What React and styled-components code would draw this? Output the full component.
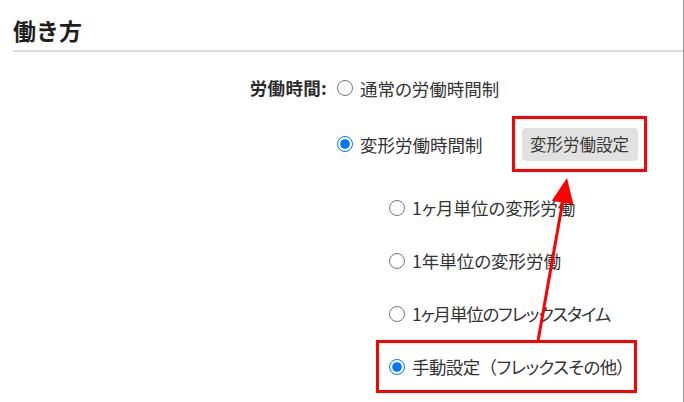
import React from "react";
import styled, { createGlobalStyle } from "styled-components";

const GlobalStyle = createGlobalStyle`
  html, body {
    margin: 0;
    padding: 0;
    background: #fff;
  }
  body {
    font-family: "Noto Sans CJK JP", "Noto Sans", sans-serif;
    color: #333;
  }
`;

const Page = styled.div`
  position: relative;
  box-sizing: border-box;
  height: 100vh;
  min-height: 402px;
  padding-left: 13px;
  border-right: 1px solid #9c9c9c;
  overflow: hidden;
`;

const Title = styled.h2`
  margin: 0;
  padding: 15px 0 5px;
  font-size: 23px;
  line-height: 30px;
  font-weight: 700;
  color: #1e1e1e;
  border-bottom: 2px solid #d9d9d9;
`;

const Form = styled.div`
  display: grid;
  grid-template-columns: 314px 1fr;
  column-gap: 10px;
  padding-top: 21px;
  font-size: 17.5px;
`;

const FieldLabel = styled.div`
  text-align: right;
  font-weight: 700;
  height: 30px;
  line-height: 30px;
  color: #2b2b2b;
  letter-spacing: 0.3px;
`;

const OptionList = styled.div`
  display: flex;
  flex-direction: column;
`;

const MainOption = styled.label`
  display: flex;
  align-items: center;
  gap: 7px;
  height: ${(p) => (p.$tall ? 56 : 30)}px;
  margin-top: ${(p) => (p.$tall ? 13 : 0)}px;
  white-space: nowrap;
`;

const Radio = styled.input.attrs({ type: "radio" })`
  flex: none;
  width: 16px;
  height: 16px;
  margin: 0;
`;

const OptionText = styled.span`
  font-feature-settings: "palt";
  letter-spacing: ${(p) => p.$tight || 0}px;
`;

const FullWidth = styled.span`
  font-feature-settings: normal;
`;

const ButtonFrame = styled.div`
  box-sizing: border-box;
  width: 135px;
  height: 56px;
  margin-left: 22px;
  border: 3px solid #ff0000;
  display: flex;
  align-items: center;
  justify-content: center;
  padding-left: 1px;
`;

const SettingButton = styled.button`
  width: 116px;
  height: 33px;
  border: none;
  border-radius: 4px;
  background: #e1e1e1;
  color: #3a3a3a;
  font-family: inherit;
  font-size: 16.5px;
  padding: 0;
`;

const SubList = styled.div`
  display: flex;
  flex-direction: column;
  margin: 9px 0 0 39px;
`;

const SubOption = styled.label`
  box-sizing: border-box;
  align-self: flex-start;
  display: flex;
  align-items: center;
  gap: 7px;
  height: 53px;
  width: ${(p) => (p.$highlight ? "261px" : "auto")};
  padding-left: 10px;
  border: 3px solid ${(p) => (p.$highlight ? "#ff0000" : "transparent")};
  white-space: nowrap;
`;

const ArrowLayer = styled.svg`
  position: absolute;
  top: 0;
  left: 0;
  pointer-events: none;
`;

const subOptions = [
  { key: "m", text: "1ヶ月単位の変形労働" },
  { key: "y", text: "1年単位の変形労働" },
  { key: "f", text: "1ヶ月単位のフレックスタイム", tight: -1.2 },
  {
    key: "h",
    text: (
      <>
        手動設定<FullWidth>（</FullWidth>フレックスその他）
      </>
    ),
    tight: -0.6,
    checked: true,
    highlight: true,
  },
];

const App = () => {
  return (
    <>
      <GlobalStyle />
      <Page>
        <Title>働き方</Title>
        <Form>
          <FieldLabel>労働時間:</FieldLabel>
          <OptionList>
            <MainOption>
              <Radio name="worktime" />
              <OptionText>通常の労働時間制</OptionText>
            </MainOption>
            <MainOption $tall>
              <Radio name="worktime" defaultChecked />
              <OptionText>変形労働時間制</OptionText>
              <ButtonFrame>
                <SettingButton type="button">変形労働設定</SettingButton>
              </ButtonFrame>
            </MainOption>
            <SubList>
              {subOptions.map((o) => (
                <SubOption key={o.key} $highlight={o.highlight}>
                  <Radio name="variant" defaultChecked={o.checked} />
                  <OptionText $tight={o.tight}>{o.text}</OptionText>
                </SubOption>
              ))}
            </SubList>
          </OptionList>
        </Form>
        <ArrowLayer width="684" height="402" viewBox="0 0 684 402">
          <line x1="538" y1="341" x2="563" y2="200" stroke="#ff0000" strokeWidth="3" />
          <polygon points="567,178 573.4,204.5 551.8,200.7" fill="#ff0000" />
        </ArrowLayer>
      </Page>
    </>
  );
};

export default App;
